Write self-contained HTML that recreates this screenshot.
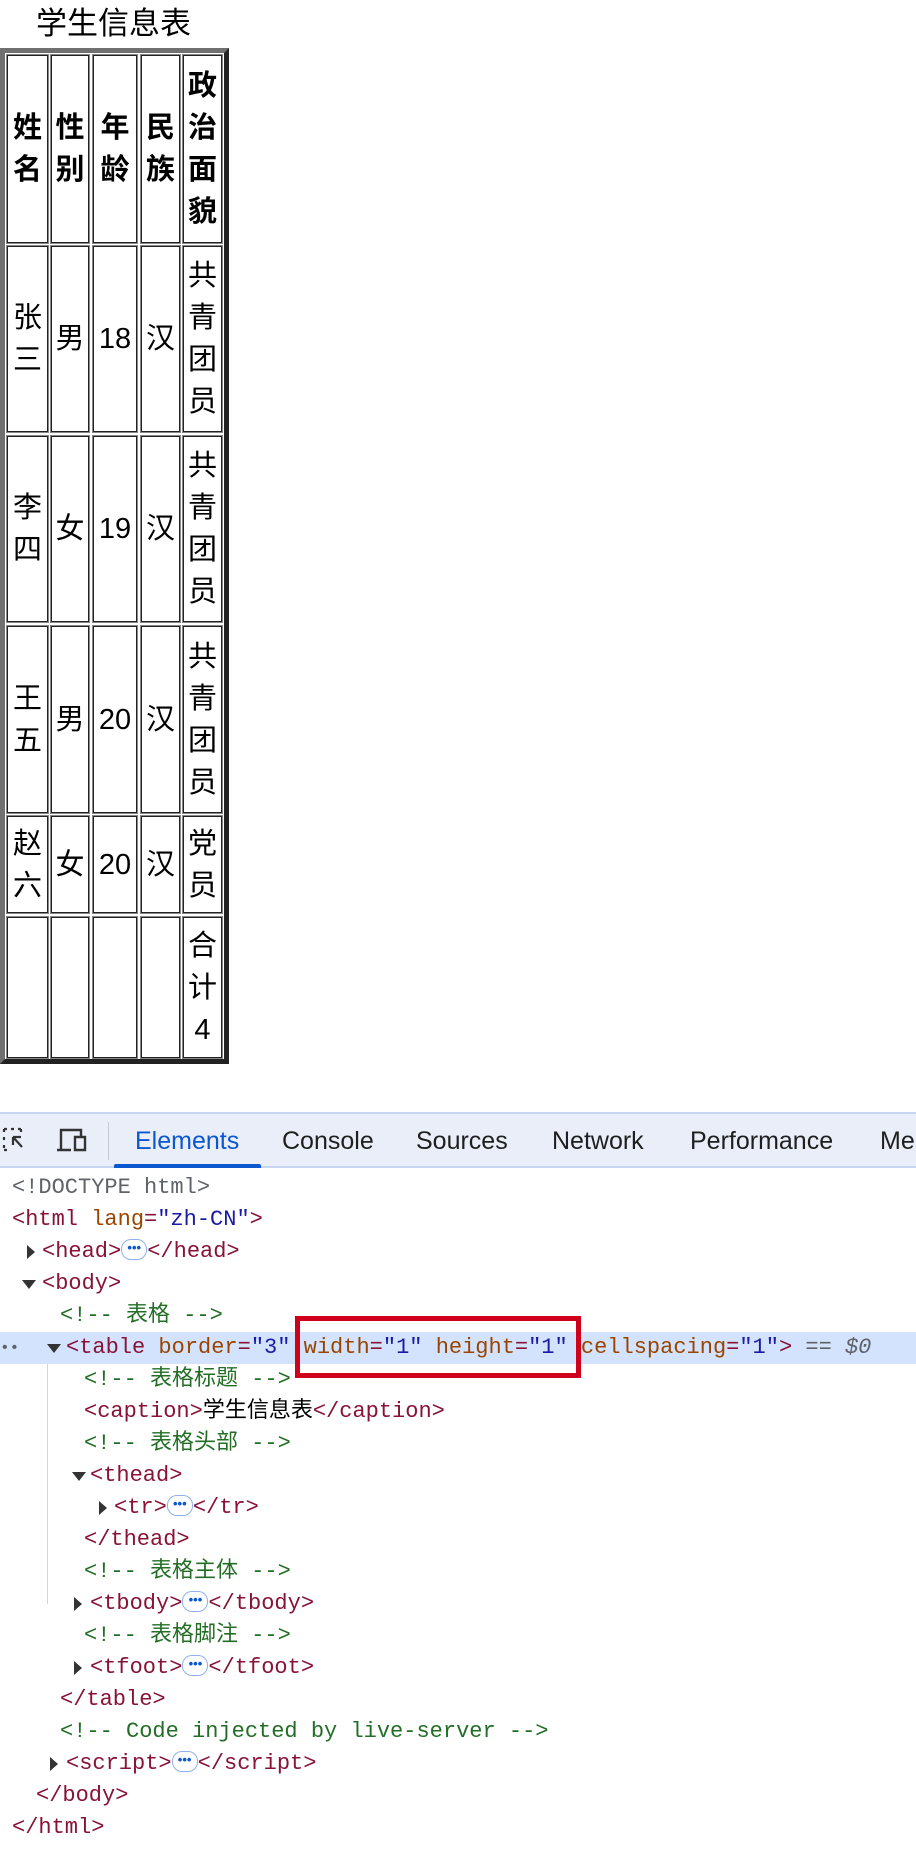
<!DOCTYPE html>
<html lang="zh-CN"><head><meta charset="utf-8"><style>
*{margin:0;padding:0;box-sizing:border-box}
body{width:916px;height:1870px;background:#fff;position:relative;overflow:hidden;font-family:"Liberation Sans","Noto Sans CJK SC",sans-serif;color:#000}
.cap{position:absolute;left:36px;top:5px;font-size:31px;line-height:38px}
.tbl{position:absolute;left:0;top:48px;width:229px;height:1016px;border:5px solid;border-color:#707070 #222 #222 #707070}
.c{position:absolute;border:1px solid #222;box-shadow:0 0 0 1px #888;display:flex;align-items:center;justify-content:center;text-align:center;font-size:29px;line-height:42px}
.h{font-weight:bold}
.dt{position:absolute;left:0;top:1112px;width:916px;height:56px;background:#e9eef9;border-top:2px solid #c9d6f2;border-bottom:2px solid #c9d6f2}
.tab{position:absolute;top:13px;font-size:25px;color:#1f1f1f}
.ln{position:absolute;font-family:"Liberation Mono","Noto Sans CJK SC",monospace;font-size:22px;line-height:32px;white-space:pre;color:#881337}
.an{color:#994500}.av{color:#1a1aa6}.cm{color:#236e25}.gy{color:#5f6368}
.ar{position:absolute;width:0;height:0}
.r{border-top:7px solid transparent;border-bottom:7px solid transparent;border-left:8px solid #333}
.d{border-left:7px solid transparent;border-right:7px solid transparent;border-top:9px solid #333}
.el{display:inline-block;width:26px;height:21px;border:1.5px solid #8fb1ef;border-radius:10px;vertical-align:middle;position:relative;top:-2px;font-size:13px;line-height:16px;color:#0b57d0;font-weight:bold;text-align:center;font-family:"Liberation Sans",sans-serif}
</style></head><body>
<div class="cap">学生信息表</div>
<div class="tbl"></div>
<div class="c h" style="left:7px;top:55px;width:41px;height:188px">姓<br>名</div>
<div class="c h" style="left:51px;top:55px;width:38px;height:188px">性<br>别</div>
<div class="c h" style="left:93px;top:55px;width:44px;height:188px">年<br>龄</div>
<div class="c h" style="left:141px;top:55px;width:39px;height:188px">民<br>族</div>
<div class="c h" style="left:183px;top:55px;width:39px;height:188px">政<br>治<br>面<br>貌</div>

<div class="c" style="left:7px;top:246px;width:41px;height:186px">张<br>三</div>
<div class="c" style="left:51px;top:246px;width:38px;height:186px">男</div>
<div class="c" style="left:93px;top:246px;width:44px;height:186px">18</div>
<div class="c" style="left:141px;top:246px;width:39px;height:186px">汉</div>
<div class="c" style="left:183px;top:246px;width:39px;height:186px">共<br>青<br>团<br>员</div>

<div class="c" style="left:7px;top:436px;width:41px;height:186px">李<br>四</div>
<div class="c" style="left:51px;top:436px;width:38px;height:186px">女</div>
<div class="c" style="left:93px;top:436px;width:44px;height:186px">19</div>
<div class="c" style="left:141px;top:436px;width:39px;height:186px">汉</div>
<div class="c" style="left:183px;top:436px;width:39px;height:186px">共<br>青<br>团<br>员</div>

<div class="c" style="left:7px;top:626px;width:41px;height:187px">王<br>五</div>
<div class="c" style="left:51px;top:626px;width:38px;height:187px">男</div>
<div class="c" style="left:93px;top:626px;width:44px;height:187px">20</div>
<div class="c" style="left:141px;top:626px;width:39px;height:187px">汉</div>
<div class="c" style="left:183px;top:626px;width:39px;height:187px">共<br>青<br>团<br>员</div>

<div class="c" style="left:7px;top:816px;width:41px;height:97px">赵<br>六</div>
<div class="c" style="left:51px;top:816px;width:38px;height:97px">女</div>
<div class="c" style="left:93px;top:816px;width:44px;height:97px">20</div>
<div class="c" style="left:141px;top:816px;width:39px;height:97px">汉</div>
<div class="c" style="left:183px;top:816px;width:39px;height:97px">党<br>员</div>

<div class="c" style="left:7px;top:917px;width:41px;height:141px"></div>
<div class="c" style="left:51px;top:917px;width:38px;height:141px"></div>
<div class="c" style="left:93px;top:917px;width:44px;height:141px"></div>
<div class="c" style="left:141px;top:917px;width:39px;height:141px"></div>
<div class="c" style="left:183px;top:917px;width:39px;height:141px">合<br>计<br>4</div>

<div class="dt">
<svg style="position:absolute;left:2px;top:12px" width="30" height="30" viewBox="0 0 30 30" fill="none" stroke="#333" stroke-width="2.2"><path d="M2 3h3M9 3h3M16 3h3M2 3v3M2 11v3M2 19v3M2 24h3M19 3v3M11 11l9 10M11 11v8M11 11h8"/></svg>
<svg style="position:absolute;left:56px;top:13px" width="34" height="28" viewBox="0 0 34 28" fill="none" stroke="#333" stroke-width="2.4"><path d="M5 22V3h20v6M1 23h14M19 10h10v13H19z"/></svg>
<div style="position:absolute;left:108px;top:8px;width:1px;height:38px;background:#c4cad6"></div>
<div class="tab" style="left:135px;color:#0b57d0">Elements</div>
<div style="position:absolute;left:114px;top:50px;width:147px;height:4px;background:#0b57d0;border-radius:2px 2px 0 0"></div>
<div class="tab" style="left:282px">Console</div>
<div class="tab" style="left:416px">Sources</div>
<div class="tab" style="left:552px">Network</div>
<div class="tab" style="left:690px">Performance</div>
<div class="tab" style="left:880px">Me</div>
</div>

<div style="position:absolute;left:0;top:1332px;width:916px;height:32px;background:#d3e3fd"></div>
<div style="position:absolute;left:47px;top:1364px;width:1px;height:240px;background:#c6d5f5"></div>
<div style="position:absolute;left:295px;top:1316px;width:286px;height:62px;border:5px solid #d0021b"></div>

<div class="ln gy" style="left:12px;top:1172px">&lt;!DOCTYPE html&gt;</div>
<div class="ln" style="left:12px;top:1204px">&lt;html <span class="an">lang</span>=<span class="av">"zh-CN"</span>&gt;</div>
<div class="ar r" style="left:27px;top:1245px"></div>
<div class="ln" style="left:42px;top:1236px">&lt;head&gt;<span class="el">•••</span>&lt;/head&gt;</div>
<div class="ar d" style="left:22px;top:1280px"></div>
<div class="ln" style="left:42px;top:1268px">&lt;body&gt;</div>
<div class="ln cm" style="left:60px;top:1300px">&lt;!-- 表格 --&gt;</div>
<div class="ln gy" style="left:0;top:1332px;font-size:16px">••</div>
<div class="ar d" style="left:47px;top:1344px"></div>
<div class="ln" style="left:66px;top:1332px">&lt;table <span class="an">border</span>=<span class="av">"3"</span> <span class="an">width</span>=<span class="av">"1"</span> <span class="an">height</span>=<span class="av">"1"</span> <span class="an">cellspacing</span>=<span class="av">"1"</span>&gt; <span class="gy">== <i>$0</i></span></div>
<div class="ln cm" style="left:84px;top:1364px">&lt;!-- 表格标题 --&gt;</div>
<div class="ln" style="left:84px;top:1396px">&lt;caption&gt;<span style="color:#000">学生信息表</span>&lt;/caption&gt;</div>
<div class="ln cm" style="left:84px;top:1428px">&lt;!-- 表格头部 --&gt;</div>
<div class="ar d" style="left:72px;top:1472px"></div>
<div class="ln" style="left:90px;top:1460px">&lt;thead&gt;</div>
<div class="ar r" style="left:99px;top:1501px"></div>
<div class="ln" style="left:114px;top:1492px">&lt;tr&gt;<span class="el">•••</span>&lt;/tr&gt;</div>
<div class="ln" style="left:84px;top:1524px">&lt;/thead&gt;</div>
<div class="ln cm" style="left:84px;top:1556px">&lt;!-- 表格主体 --&gt;</div>
<div class="ar r" style="left:74px;top:1597px"></div>
<div class="ln" style="left:90px;top:1588px">&lt;tbody&gt;<span class="el">•••</span>&lt;/tbody&gt;</div>
<div class="ln cm" style="left:84px;top:1620px">&lt;!-- 表格脚注 --&gt;</div>
<div class="ar r" style="left:74px;top:1661px"></div>
<div class="ln" style="left:90px;top:1652px">&lt;tfoot&gt;<span class="el">•••</span>&lt;/tfoot&gt;</div>
<div class="ln" style="left:60px;top:1684px">&lt;/table&gt;</div>
<div class="ln cm" style="left:60px;top:1716px">&lt;!-- Code injected by live-server --&gt;</div>
<div class="ar r" style="left:50px;top:1757px"></div>
<div class="ln" style="left:66px;top:1748px">&lt;script&gt;<span class="el">•••</span>&lt;/script&gt;</div>
<div class="ln" style="left:36px;top:1780px">&lt;/body&gt;</div>
<div class="ln" style="left:12px;top:1812px">&lt;/html&gt;</div>
</body></html>
